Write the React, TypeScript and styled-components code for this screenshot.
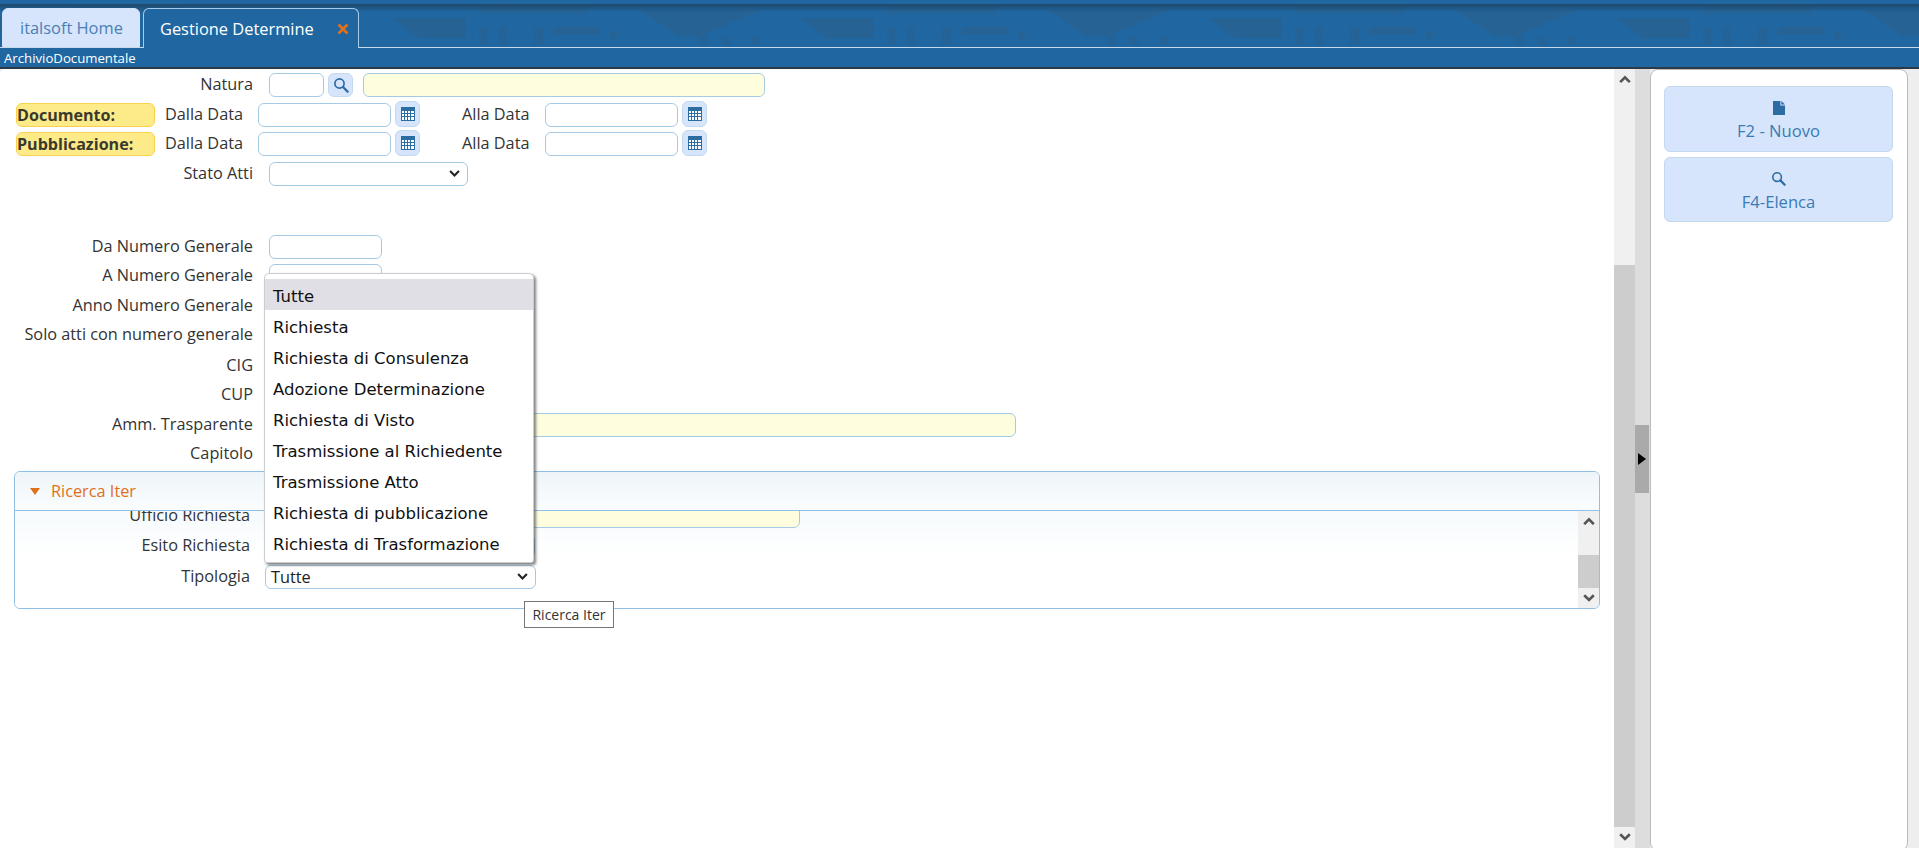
import React from "react";
import styled, { createGlobalStyle } from "styled-components";

const GlobalStyle = createGlobalStyle`
  html, body {
    margin: 0;
    padding: 0;
    height: 100%;
    overflow: hidden;
    background: #fff;
  }
  #root {
    height: 100%;
  }
  * {
    box-sizing: border-box;
  }
`;

const Page = styled.div`
  display: flex;
  flex-direction: column;
  height: 848px;
  font-family: "Open Sans", "Noto Sans", sans-serif;
  font-size: 16px;
  color: #333;
`;

const Banner = styled.div`
  position: relative;
  height: 48px;
  flex: none;
  padding: 8px 0 0 2px;
  display: flex;
  gap: 3px;
  align-items: stretch;
  background: #2067a2;
  border-bottom: 1px solid #c8d9e9;
`;

const Skyline = styled.svg`
  position: absolute;
  left: 0;
  top: 0;
  width: 100%;
  height: 47px;
`;

const Tab = styled.div<{ $active?: boolean }>`
  position: relative;
  display: flex;
  align-items: center;
  justify-content: space-between;
  height: ${(p) => (p.$active ? "40px" : "39px")};
  width: ${(p) => (p.$active ? "216px" : "138px")};
  padding: ${(p) => (p.$active ? "0 9px 0 16px" : "0 0 0 17px")};
  border-radius: 6px 6px 0 0;
  background: ${(p) => (p.$active ? "#2067a2" : "#d6e5fb")};
  border: 1px solid ${(p) => (p.$active ? "#a9cbe8" : "#d6e5fb")};
  border-bottom: ${(p) => (p.$active ? "none" : "1px solid #d6e5fb")};
  color: ${(p) => (p.$active ? "#fff" : "#4a80b4")};
  font-size: 16.4px;
  white-space: nowrap;
`;

const CloseMark = styled.svg`
  width: 12px;
  height: 12px;
`;

const ModuleBar = styled.div`
  height: 21px;
  flex: none;
  padding-left: 4px;
  line-height: 21px;
  font-size: 13.2px;
  color: #fff;
  background: #2067a2;
  border-bottom: 2px solid #2b3a46;
`;

const Workspace = styled.div`
  position: relative;
  flex: 1;
  min-height: 0;
  display: flex;
  background: #eee;
`;

const Main = styled.div`
  width: 1614px;
  flex: none;
  background: #fff;
  border-top-left-radius: 5px;
  overflow: hidden;
`;

const Form = styled.div`
  padding-top: 4px;
`;

const Row = styled.div<{ $gap?: number; $labelWidth?: number }>`
  display: flex;
  align-items: center;
  height: 24px;
  margin-top: ${(p) => p.$gap ?? 5}px;
  padding-left: ${(p) => (p.$labelWidth ? 0 : 16)}px;
`;

const Label = styled.div<{ $width?: number; $space?: number }>`
  width: ${(p) => p.$width ?? 253}px;
  flex: none;
  padding-bottom: 2px;
  text-align: right;
  white-space: nowrap;
  margin-right: ${(p) => p.$space ?? 16}px;
  font-size: 16.3px;
`;

const Badge = styled.div`
  width: 139px;
  height: 24px;
  flex: none;
  line-height: 22px;
  font-weight: 700;
  font-size: 16.1px;
  color: #3a3a2c;
  background: #fdeb8a;
  border: 1px solid #f8d24e;
  border-radius: 6px;
`;

const PlainLabel = styled.div<{ $left: number; $width: number }>`
  margin-left: ${(p) => p.$left}px;
  width: ${(p) => p.$width}px;
  flex: none;
  padding-bottom: 2px;
  white-space: nowrap;
  font-size: 16.3px;
`;

const Field = styled.div<{ $width: number; $yellow?: boolean; $left?: number }>`
  width: ${(p) => p.$width}px;
  height: 24px;
  flex: none;
  margin-left: ${(p) => p.$left ?? 0}px;
  background: ${(p) => (p.$yellow ? "#fefedf" : "#fff")};
  border: 1px solid #a6cae4;
  border-radius: 6px;
`;

const Select = styled(Field)`
  display: flex;
  align-items: center;
  justify-content: space-between;
  padding: 0 7px 0 5px;
  font-size: 16.3px;
  color: #222;
`;

const IconButton = styled.div<{ $raised?: boolean; $left?: number }>`
  width: 25px;
  height: ${(p) => (p.$raised ? 26 : 24)}px;
  flex: none;
  display: flex;
  align-items: center;
  justify-content: center;
  margin-left: ${(p) => p.$left ?? 4}px;
  margin-top: ${(p) => (p.$raised ? -3 : 0)}px;
  background: #d6e5fb;
  border: 1px solid #c3d9f0;
  border-radius: 6px;
`;

const ScrollBar = styled.div<{ $width: number }>`
  width: ${(p) => p.$width}px;
  flex: none;
  display: flex;
  flex-direction: column;
  background: #f0f0f0;
`;

const ScrollArrow = styled.div<{ $height: number }>`
  height: ${(p) => p.$height}px;
  flex: none;
  display: flex;
  align-items: center;
  justify-content: center;
`;

const ScrollGap = styled.div<{ $height: number }>`
  height: ${(p) => p.$height}px;
  flex: none;
`;

const ScrollThumb = styled.div`
  flex: 1;
  min-height: 0;
  background: #cdcdcd;
`;

const Splitter = styled.div`
  width: 15px;
  flex: none;
  display: flex;
  align-items: center;
  background: #ddd;
`;

const SplitterGrip = styled.div`
  width: 14px;
  height: 68px;
  display: flex;
  align-items: center;
  justify-content: center;
  background: #aaa;
`;

const SidePanel = styled.div`
  width: 258px;
  height: 782px;
  flex: none;
  padding: 16px 14px 0 13px;
  display: flex;
  flex-direction: column;
  gap: 5px;
  background: #fff;
  border: 1px solid #bbb;
  border-radius: 8px;
`;

const ActionButton = styled.div<{ $height: number }>`
  height: ${(p) => p.$height}px;
  display: flex;
  flex-direction: column;
  align-items: center;
  justify-content: center;
  gap: 4px;
  padding-top: 5px;
  font-size: 16.6px;
  color: #3b7ab3;
  background: #d6e5fb;
  border: 1px solid #c3d9f0;
  border-radius: 6px;
`;

const Section = styled.div`
  margin: 5px 0 0 14px;
  width: 1586px;
  height: 138px;
  display: flex;
  flex-direction: column;
  border: 1px solid #8fc0e8;
  border-radius: 6px;
  overflow: hidden;
`;

const SectionHeader = styled.div`
  height: 39px;
  flex: none;
  display: flex;
  align-items: center;
  gap: 11px;
  padding-left: 15px;
  color: #e0701a;
  font-size: 16.3px;
  background: linear-gradient(#eef5f9, #fbfdfe);
  border-bottom: 1px solid #8fc0e8;
`;

const SectionBody = styled.div`
  flex: 1;
  min-height: 0;
  display: flex;
`;

const SectionForm = styled.div`
  flex: 1;
  overflow: hidden;
  background: linear-gradient(#f6fafc, #fff 45%);
`;

const SectionRow = styled.div<{ $gap: number }>`
  display: flex;
  align-items: center;
  height: 24px;
  margin-top: ${(p) => p.$gap}px;
`;

const Dropdown = styled.div`
  position: absolute;
  left: 264px;
  top: 204px;
  width: 270px;
  height: 290px;
  padding: 5px 0;
  background: #fff;
  border: 1px solid #c9ced3;
  border-radius: 5px 5px 3px 3px;
  box-shadow: 2px 2px 3px rgba(60, 60, 60, 0.65);
`;

const Option = styled.div<{ $selected?: boolean }>`
  height: 31px;
  line-height: 36px;
  overflow: hidden;
  padding-left: 8px;
  font-family: "DejaVu Sans", Verdana, sans-serif;
  font-size: 16.5px;
  color: #111;
  background: ${(p) => (p.$selected ? "#e0dfe5" : "transparent")};
`;

const Tooltip = styled.div`
  position: absolute;
  left: 524px;
  top: 532px;
  width: 90px;
  height: 27px;
  line-height: 25px;
  text-align: center;
  font-size: 14px;
  color: #333;
  background: #fff;
  border: 1px solid #767676;
`;

const SearchIcon = ({ size = 16 }: { size?: number }) => (
  <svg width={size} height={size} viewBox="0 0 16 16">
    <circle cx="6.5" cy="6.5" r="4.6" fill="none" stroke="#2b6ca3" strokeWidth="1.7" />
    <path d="M10 10l4.6 4.6" stroke="#2b6ca3" strokeWidth="2.3" strokeLinecap="round" />
  </svg>
);

const CalendarIcon = () => (
  <svg width="14" height="14" viewBox="0 0 14 14" shapeRendering="crispEdges">
    <rect x="0" y="0" width="14" height="14" fill="#fff" />
    <rect x="0" y="0" width="14" height="4" fill="#2b6ca3" />
    <path
      d="M0 6.5h14M0 9.5h14M0 13.5h14M.5 4v10M3.5 4v10M6.5 4v10M9.5 4v10M13.5 4v10"
      stroke="#2b6ca3"
      strokeWidth="1"
      fill="none"
    />
  </svg>
);

const FileIcon = () => (
  <svg width="12" height="14" viewBox="0 0 12 14">
    <path d="M0 0h7.4v4.4H12V14H0z" fill="#2b6ca3" />
    <path d="M8.4 0L12 3.5H8.4z" fill="#2b6ca3" />
  </svg>
);

const Chevron = ({ up, color = "#222", size = 11, weight = 1.9 }: { up?: boolean; color?: string; size?: number; weight?: number }) => (
  <svg width={size} height={size * 0.7} viewBox="0 0 10 7">
    <path d={up ? "M1 6l4-4 4 4" : "M1 1l4 4 4-4"} fill="none" stroke={color} strokeWidth={weight} />
  </svg>
);

const Triangle = ({ color }: { color: string }) => (
  <svg width="10" height="7" viewBox="0 0 10 7">
    <path d="M0 0h10L5 7z" fill={color} />
  </svg>
);

const STATI = [
  "Tutte",
  "Richiesta",
  "Richiesta di Consulenza",
  "Adozione Determinazione",
  "Richiesta di Visto",
  "Trasmissione al Richiedente",
  "Trasmissione Atto",
  "Richiesta di pubblicazione",
  "Richiesta di Trasformazione",
];

function DateRange({ title, gap }: { title: string; gap: number }) {
  return (
    <Row $gap={gap}>
      <Badge>{title}</Badge>
      <PlainLabel $left={10} $width={93}>Dalla Data</PlainLabel>
      <Field $width={133} />
      <IconButton $raised>
        <CalendarIcon />
      </IconButton>
      <PlainLabel $left={42} $width={83}>Alla Data</PlainLabel>
      <Field $width={133} />
      <IconButton $raised>
        <CalendarIcon />
      </IconButton>
    </Row>
  );
}

function FormRow({ label, gap, children }: { label: string; gap?: number; children?: React.ReactNode }) {
  return (
    <Row $gap={gap} $labelWidth={253}>
      <Label>{label}</Label>
      {children}
    </Row>
  );
}

function Scroll({ width, before, arrow }: { width: number; before: number; arrow: number }) {
  return (
    <ScrollBar $width={width}>
      <ScrollArrow $height={arrow}>
        <Chevron up color="#555" size={12} weight={2.2} />
      </ScrollArrow>
      <ScrollGap $height={before} />
      <ScrollThumb />
      <ScrollArrow $height={arrow}>
        <Chevron color="#555" size={12} weight={2.2} />
      </ScrollArrow>
    </ScrollBar>
  );
}

export default function App() {
  return (
    <>
      <GlobalStyle />
      <Page>
        <Banner>
          <Skyline>
            <defs>
              <pattern id="town" x="393" y="0" width="408" height="47" patternUnits="userSpaceOnUse">
                <path d="M0 18h73v20H25z" fill="#28608f" opacity="0.75" />
                <path d="M86 27h8v18h-8zM106 27h8v18h-8zM141 27h9v18h-9z" fill="#28608f" opacity="0.55" />
                <path d="M161 27h46v7h-46z" fill="#28608f" opacity="0.75" />
                <path d="M85 6h110v8H85z" fill="#28608f" opacity="0.45" />
                <circle cx="220" cy="35" r="4" fill="#28608f" opacity="0.8" />
                <path d="M247 10h120l-58 26h-24z" fill="#28608f" opacity="0.7" />
                <path d="M306 36h8v9h-8zM329 36h8v9h-8zM358 36h8v9h-8z" fill="#28608f" opacity="0.55" />
              </pattern>
              <linearGradient id="shade" x1="0" y1="0" x2="0" y2="1">
                <stop offset="0" stopColor="#1c3f5c" stopOpacity="0.7" />
                <stop offset="1" stopColor="#1c3f5c" stopOpacity="0" />
              </linearGradient>
            </defs>
            <rect x="0" y="0" width="100%" height="47" fill="url(#town)" />
            <rect x="0" y="5" width="100%" height="7" fill="url(#shade)" />
            <rect x="0" y="4" width="100%" height="1" fill="#234c6c" />
          </Skyline>
          <Tab>italsoft Home</Tab>
          <Tab $active>
            Gestione Determine
            <CloseMark viewBox="0 0 12 12">
              <path d="M1.5 1.5l9 9M10.5 1.5l-9 9" stroke="#e0701a" strokeWidth="2.6" />
            </CloseMark>
          </Tab>
        </Banner>
        <ModuleBar>ArchivioDocumentale</ModuleBar>
        <Workspace>
          <Main>
            <Form>
              <FormRow label="Natura" gap={0}>
                <Field $width={55} />
                <IconButton>
                  <SearchIcon />
                </IconButton>
                <Field $width={402} $yellow $left={10} />
              </FormRow>
              <DateRange title="Documento:" gap={6} />
              <DateRange title="Pubblicazione:" gap={5} />
              <FormRow label="Stato Atti" gap={6}>
                <Select $width={199}>
                  <span />
                  <Chevron />
                </Select>
              </FormRow>
              <FormRow label="Da Numero Generale" gap={49}>
                <Field $width={113} />
              </FormRow>
              <FormRow label="A Numero Generale">
                <Field $width={113} />
              </FormRow>
              <FormRow label="Anno Numero Generale" gap={6}>
                <Field $width={113} />
              </FormRow>
              <FormRow label="Solo atti con numero generale" />
              <FormRow label="CIG" gap={7}>
                <Field $width={113} />
              </FormRow>
              <FormRow label="CUP">
                <Field $width={113} />
              </FormRow>
              <FormRow label="Amm. Trasparente" gap={6}>
                <Field $width={747} $yellow />
              </FormRow>
              <FormRow label="Capitolo">
                <Field $width={113} />
              </FormRow>
            </Form>
            <Section>
              <SectionHeader>
                <Triangle color="#e0701a" />
                Ricerca Iter
              </SectionHeader>
              <SectionBody>
                <SectionForm>
                  <SectionRow $gap={-7}>
                    <Label $width={235} $space={15}>Ufficio Richiesta</Label>
                    <Field $width={535} $yellow />
                  </SectionRow>
                  <SectionRow $gap={6}>
                    <Label $width={235} $space={15}>Esito Richiesta</Label>
                    <Field $width={270} />
                  </SectionRow>
                  <SectionRow $gap={7}>
                    <Label $width={235} $space={15}>Tipologia</Label>
                    <Select $width={271}>
                      Tutte
                      <Chevron />
                    </Select>
                  </SectionRow>
                </SectionForm>
                <Scroll width={21} before={24} arrow={20} />
              </SectionBody>
            </Section>
          </Main>
          <Scroll width={21} before={175} arrow={21} />
          <Splitter>
            <SplitterGrip>
              <svg width="8" height="12" viewBox="0 0 8 12">
                <path d="M0 0l8 6-8 6z" fill="#000" />
              </svg>
            </SplitterGrip>
          </Splitter>
          <SidePanel>
            <ActionButton $height={66}>
              <FileIcon />
              F2 - Nuovo
            </ActionButton>
            <ActionButton $height={65}>
              <SearchIcon size={15} />
              F4-Elenca
            </ActionButton>
          </SidePanel>
          <Dropdown>
            {STATI.map((s, i) => (
              <Option key={s} $selected={i === 0}>
                {s}
              </Option>
            ))}
          </Dropdown>
          <Tooltip>Ricerca Iter</Tooltip>
        </Workspace>
      </Page>
    </>
  );
}
